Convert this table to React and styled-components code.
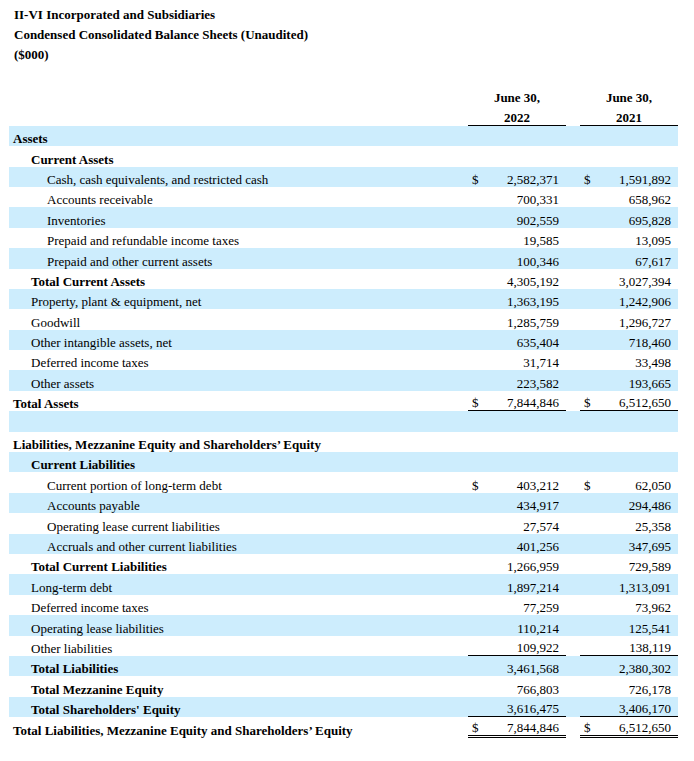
import React from 'react';
import styled, { createGlobalStyle } from 'styled-components';

const GlobalStyle = createGlobalStyle`
    body {
        margin: 0;
        background: #fff;
        color: #000;
        font-family: "Liberation Serif", "Times New Roman", serif;
        font-size: 13px;
    }
`;

const COLS = '459px 98px 14px 98px';

const Page = styled.div`
    padding: 5px 0 0 9px;
`;

const Title = styled.div`
    padding-left: 5px;
    line-height: 20px;
    font-weight: bold;
`;

const Table = styled.div`
    margin-top: 20px;
    width: 669px;
`;

const HeadRow = styled.div`
    display: grid;
    grid-template-columns: ${COLS};
    height: 20.4px;
`;

const HeadCell = styled.div`
    grid-column: ${({$col}) => $col};
    display: flex;
    align-items: flex-end;
    justify-content: center;
    font-weight: bold;
    line-height: 15px;
    border-bottom: ${({$line}) => $line ? '1.5px solid #000' : 'none'};
`;

const Row = styled.div`
    display: grid;
    grid-template-columns: ${COLS};
    height: 20.4px;
    background: ${({$shade}) => $shade ? '#cdedfd' : 'transparent'};
`;

const Label = styled.div`
    display: flex;
    align-items: flex-end;
    line-height: 15px;
    padding-left: ${({$level}) => [4, 22, 38][$level]}px;
    font-weight: ${({$bold}) => $bold ? 'bold' : 'normal'};
    white-space: nowrap;
`;

const Value = styled.div`
    grid-column: ${({$col}) => $col};
    display: flex;
    align-items: flex-end;
    justify-content: space-between;
    line-height: 15px;
    padding: 0 7px 0 4px;
    border-bottom: ${({$line}) => $line === 'double' ? '3px double #000' : $line === 'single' ? '1px solid #000' : 'none'};
`;

const rows = [
    { label: 'Assets', level: 0, bold: true },
    { label: 'Current Assets', level: 1, bold: true },
    { label: 'Cash, cash equivalents, and restricted cash', level: 2, a: '2,582,371', b: '1,591,892', dollar: true },
    { label: 'Accounts receivable', level: 2, a: '700,331', b: '658,962' },
    { label: 'Inventories', level: 2, a: '902,559', b: '695,828' },
    { label: 'Prepaid and refundable income taxes', level: 2, a: '19,585', b: '13,095' },
    { label: 'Prepaid and other current assets', level: 2, a: '100,346', b: '67,617' },
    { label: 'Total Current Assets', level: 1, bold: true, a: '4,305,192', b: '3,027,394' },
    { label: 'Property, plant & equipment, net', level: 1, a: '1,363,195', b: '1,242,906' },
    { label: 'Goodwill', level: 1, a: '1,285,759', b: '1,296,727' },
    { label: 'Other intangible assets, net', level: 1, a: '635,404', b: '718,460' },
    { label: 'Deferred income taxes', level: 1, a: '31,714', b: '33,498' },
    { label: 'Other assets', level: 1, a: '223,582', b: '193,665' },
    { label: 'Total Assets', level: 0, bold: true, a: '7,844,846', b: '6,512,650', dollar: true, line: 'single' },
    { label: '', level: 0 },
    { label: 'Liabilities, Mezzanine Equity and Shareholders\u2019 Equity', level: 0, bold: true },
    { label: 'Current Liabilities', level: 1, bold: true },
    { label: 'Current portion of long-term debt', level: 2, a: '403,212', b: '62,050', dollar: true },
    { label: 'Accounts payable', level: 2, a: '434,917', b: '294,486' },
    { label: 'Operating lease current liabilities', level: 2, a: '27,574', b: '25,358' },
    { label: 'Accruals and other current liabilities', level: 2, a: '401,256', b: '347,695' },
    { label: 'Total Current Liabilities', level: 1, bold: true, a: '1,266,959', b: '729,589' },
    { label: 'Long-term debt', level: 1, a: '1,897,214', b: '1,313,091' },
    { label: 'Deferred income taxes', level: 1, a: '77,259', b: '73,962' },
    { label: 'Operating lease liabilities', level: 1, a: '110,214', b: '125,541' },
    { label: 'Other liabilities', level: 1, a: '109,922', b: '138,119', line: 'single' },
    { label: 'Total Liabilities', level: 1, bold: true, a: '3,461,568', b: '2,380,302' },
    { label: 'Total Mezzanine Equity', level: 1, bold: true, a: '766,803', b: '726,178' },
    { label: "Total Shareholders' Equity", level: 1, bold: true, a: '3,616,475', b: '3,406,170', line: 'single' },
    { label: 'Total Liabilities, Mezzanine Equity and Shareholders\u2019 Equity', level: 0, bold: true, a: '7,844,846', b: '6,512,650', dollar: true, line: 'double' },
];

const Amount = ({ col, value, dollar, line }) => (
    <Value $col={col} $line={line}>
        <span>{dollar ? '$' : ''}</span>
        <span>{value}</span>
    </Value>
);

export default function App() {
    return (
        <Page>
            <GlobalStyle />
            <Title>II-VI Incorporated and Subsidiaries</Title>
            <Title>Condensed Consolidated Balance Sheets (Unaudited)</Title>
            <Title>($000)</Title>
            <Table>
                <HeadRow>
                    <HeadCell $col={2}>June 30,</HeadCell>
                    <HeadCell $col={4}>June 30,</HeadCell>
                </HeadRow>
                <HeadRow>
                    <HeadCell $col={2} $line>2022</HeadCell>
                    <HeadCell $col={4} $line>2021</HeadCell>
                </HeadRow>
                {rows.map((r, i) => (
                    <Row key={i} $shade={i % 2 === 0}>
                        <Label $level={r.level} $bold={r.bold}>{r.label}</Label>
                        {r.a && <Amount col={2} value={r.a} dollar={r.dollar} line={r.line} />}
                        {r.b && <Amount col={4} value={r.b} dollar={r.dollar} line={r.line} />}
                    </Row>
                ))}
            </Table>
        </Page>
    );
}
